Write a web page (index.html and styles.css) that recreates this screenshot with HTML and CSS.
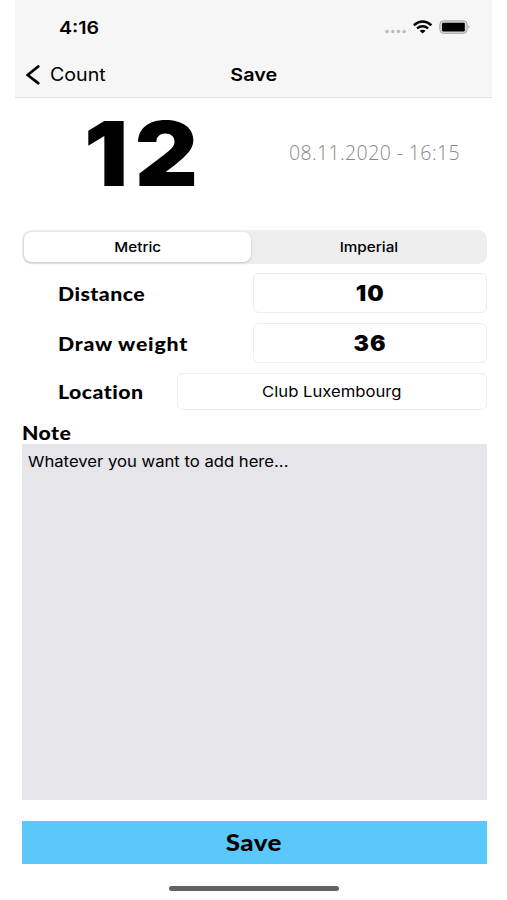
FILE: index.html
```html
<!DOCTYPE html>
<html lang="en">
<head>
    <meta charset="UTF-8">
    <meta name="viewport" content="width=device-width, initial-scale=1.0">
    <title>Save</title>
    <link rel="stylesheet" href="styles.css">
</head>
<body>
    <div class="screen">
        <header class="header">
            <div class="status-bar">
                <span class="time">4:16</span>
                <svg class="status-icons" width="86" height="16" viewBox="0 0 86 16">
                    <g fill="#bcbcbc">
                        <circle cx="3" cy="11.5" r="1.8"/>
                        <circle cx="8.8" cy="11.5" r="1.8"/>
                        <circle cx="14.5" cy="11.5" r="1.8"/>
                        <circle cx="20.2" cy="11.5" r="1.8"/>
                    </g>
                    <g fill="none" stroke="#000" stroke-width="2.4">
                        <path d="M29.8 5.2Q38.6 -2 47.4 5.2"/>
                        <path d="M33 8.4Q38.6 4 44.2 8.4"/>
                    </g>
                    <path d="M35.6 10.7Q38.6 8.6 41.6 10.7L38.6 13.4Z"/>
                    <rect x="55.8" y="0.8" width="27.4" height="12.6" rx="3.8" fill="#d6d6d6" stroke="#a8a8a8" stroke-width="1"/>
                    <rect x="58" y="2.8" width="22.8" height="8.6" rx="1.2"/>
                    <path d="M84.5 5.3Q86.5 7 84.5 8.8Z" fill="#999"/>
                </svg>
            </div>
            <nav class="nav-bar">
                <a class="back">
                    <svg width="14" height="20" viewBox="0 0 14 20" fill="none" stroke="#000" stroke-width="2.8" stroke-linecap="round" stroke-linejoin="round">
                        <path d="M12.2 1.5L1.6 10L12.2 18.2"/>
                    </svg>
                    <span>Count</span>
                </a>
                <h1>Save</h1>
            </nav>
        </header>

        <main class="content">
            <section class="summary">
                <span class="score">12</span>
                <span class="date">08.11.2020 - 16:15</span>
            </section>

            <div class="segments">
                <button class="segment active"><span>Metric</span></button>
                <button class="segment"><span>Imperial</span></button>
            </div>

            <div class="row">
                <span class="label">Distance</span>
                <div class="field"><span class="number">10</span></div>
            </div>
            <div class="row">
                <span class="label weight">Draw weight</span>
                <div class="field"><span class="number">36</span></div>
            </div>
            <div class="row location-row">
                <span class="label">Location</span>
                <div class="field wide"><span class="place">Club Luxembourg</span></div>
            </div>

            <div class="note-title"><span class="label">Note</span></div>
            <div class="note"><span>Whatever you want to add here...</span></div>

            <button class="save"><span>Save</span></button>
        </main>
        <div class="home-indicator"></div>
    </div>
</body>
</html>
```
FILE: styles.css
```css
* {
    box-sizing: border-box;
}

body {
    margin: 0;
    background: #fff;
    color: #000;
    font-family: Inter, sans-serif;
}

button {
    border: none;
    padding: 0;
    font-family: inherit;
    color: #000;
}

.screen {
    width: 477px;
    height: 900px;
    margin-left: 15px;
    overflow: hidden;
}

.header {
    height: 98px;
    background: #f6f6f6;
    border-bottom: 1px solid #e2e2e2;
}

.status-bar {
    display: flex;
    justify-content: space-between;
    height: 54px;
    padding: 20px 22px 0 44px;
}

.time {
    font-size: 17.5px;
    line-height: 15px;
    font-weight: 600;
    transform: scaleX(1.12);
    transform-origin: left;
}

.nav-bar {
    display: grid;
    grid-template-columns: 1fr auto 1fr;
    align-items: center;
    height: 41px;
    padding: 0 11px;
}

.back {
    display: flex;
    align-items: center;
    gap: 10px;
    font-size: 18px;
}

.back span {
    transform: scaleX(1.09);
    transform-origin: left;
}

h1 {
    margin: 0;
    font-size: 17.5px;
    font-weight: 600;
    transform: scaleX(1.13);
}

.content {
    padding: 0 5px 0 7px;
}

.summary {
    display: flex;
    justify-content: space-between;
    align-items: center;
    height: 110px;
    margin-bottom: 22px;
    padding: 0 27px 0 62px;
}

.score {
    font-size: 89px;
    line-height: 110px;
    font-weight: 900;
    letter-spacing: 6px;
    transform: translateY(1px) scaleX(1.1);
    transform-origin: left;
}

.date {
    font-family: "Open Sans", sans-serif;
    font-size: 19.5px;
    font-weight: 300;
    letter-spacing: 0.4px;
    color: #888;
    transform: translateY(-1px);
}

.segments {
    display: flex;
    height: 34px;
    margin-bottom: 9px;
    padding: 2px 0 2px 2px;
    border-radius: 9px;
    background: #eeeeef;
}

.segment {
    width: 235px;
    border-radius: 8px;
    background: none;
    font-size: 13.5px;
    font-weight: 500;
}

.segment span {
    display: inline-block;
    transform: scaleX(1.13);
}

.segment.active {
    width: 227px;
    background: #fff;
    box-shadow: 0 1px 3px rgba(0, 0, 0, 0.18);
}

.row {
    display: flex;
    justify-content: space-between;
    align-items: center;
    height: 40px;
    margin-bottom: 10px;
    padding-left: 36px;
}

.label {
    font-family: Lato, sans-serif;
    font-size: 19px;
    line-height: 23px;
    font-weight: 900;
    font-variant-ligatures: none;
    letter-spacing: 0.4px;
    transform: translateY(-0.5px) scaleX(1.12);
    transform-origin: left;
}

.weight {
    letter-spacing: 0.7px;
}

.field {
    display: flex;
    justify-content: center;
    align-items: center;
    width: 234px;
    height: 100%;
    border: 1px solid #ececec;
    border-radius: 6px;
    font-size: 15px;
}

.number {
    font-size: 21px;
    font-weight: 900;
    letter-spacing: 1px;
    transform: scaleX(1.1);
}

.place {
    transform: scaleX(1.11);
}

.location-row {
    height: 37px;
    margin-bottom: 11px;
}

.wide {
    width: 310px;
}

.note-title {
    display: flex;
    align-items: center;
    height: 23px;
}

.note {
    height: 356px;
    margin-bottom: 21px;
    padding: 8px 6px;
    background: #e5e5ea;
    font-size: 15px;
    line-height: 19px;
}

.note span {
    display: inline-block;
    transform: scaleX(1.11);
    transform-origin: left;
}

.save {
    display: block;
    width: 100%;
    height: 43px;
    background: #5ac8fa;
    font-family: Lato, sans-serif;
    font-size: 22px;
    font-weight: 900;
}

.save span {
    display: inline-block;
    letter-spacing: 0.4px;
    transform: translateX(-1px) scaleX(1.18);
}

.home-indicator {
    width: 170px;
    height: 5px;
    margin: 22px auto 0;
    border-radius: 3px;
    background: #636363;
}
```
